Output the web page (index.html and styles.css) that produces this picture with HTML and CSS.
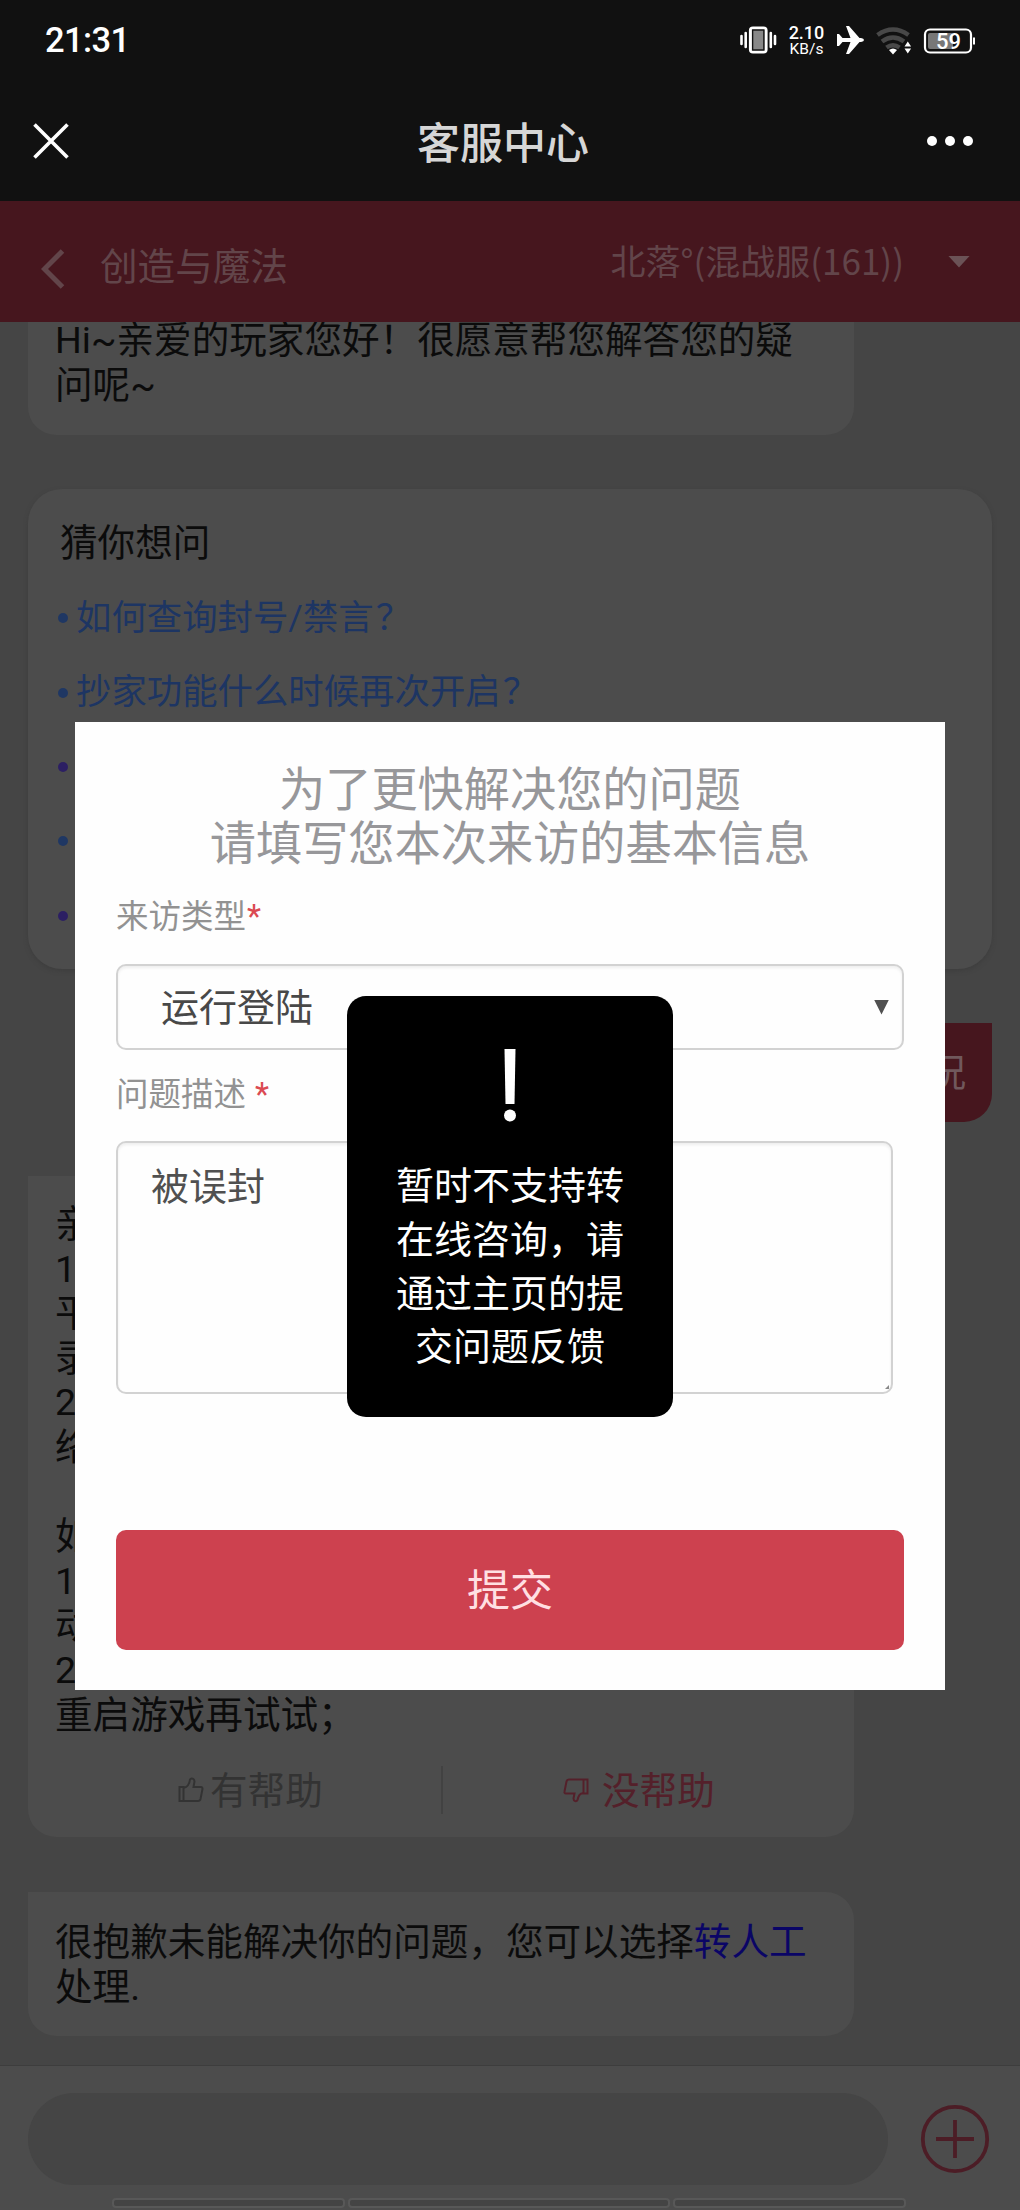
FILE: index.html
```html
<!DOCTYPE html>
<html lang="zh-CN">
<head>
<meta charset="utf-8">
<title>客服中心</title>
<link rel="stylesheet" href="styles.css">
</head>
<body>
<div class="screen">
  <div class="status">
    <span class="clock">21:31</span>
    <svg class="status-icons" width="240" height="40" viewBox="0 0 240 40">
      <rect x="10.500" y="8" width="15.500" height="24" rx="2.500" fill="#888" stroke="#fff" stroke-width="3.200"/>
      <rect x="12.600" y="10" width="11.300" height="20" fill="none" stroke="#111" stroke-width="1.400"/>
      <path d="M1.500 16v8M5.700 13v14M30.800 13v14M35 16v8" stroke="#fff" stroke-width="2.600" stroke-linecap="round"/>
      <text x="66.500" y="19" class="rate">2.10</text>
      <text x="66.500" y="33.500" class="unit">KB/s</text>
      <path d="M97 14h2l3.500 4h8L106 6h3l10.500 12H121q3 .5 3 2t-3 2h-1.500L109 34h-3l4.500-12h-8l-3.500 4h-2z" fill="#fff"/>
      <g fill="none" stroke="#484848" stroke-width="4.500">
        <path d="M137.500 15q15.500-11 31 0"/><path d="M142 21.500q11-8 22 0"/><path d="M146.500 27.500q6.500-4.500 13 0"/>
      </g>
      <path d="M149 30q4-3 8 0l-4 4.500z" fill="#fff"/>
      <path d="M164.500 26.500l3.300-5 3.300 5zM164.500 28.500l3.300 5 3.300-5z" fill="#fff"/>
      <rect x="188" y="13" width="25" height="16" rx="2" fill="#777"/>
      <rect x="185" y="9.500" width="46" height="23" rx="5" fill="none" stroke="#fff" stroke-width="2.200"/>
      <path d="M234 17.500v7" stroke="#fff" stroke-width="2"/>
      <text x="208.500" y="29" class="battery">59</text>
    </svg>
  </div>
  <div class="titlebar">
    <svg width="36" height="36" viewBox="0 0 36 36"><path d="M1.500 1.500L34.500 34.500M34.500 1.500L1.500 34.500" stroke="#fff" stroke-width="3.600"/></svg>
    <h1>客服中心</h1>
    <svg width="46" height="10" viewBox="0 0 46 10" fill="#fff"><circle cx="5" cy="5" r="5"/><circle cx="23" cy="5" r="5"/><circle cx="41" cy="5" r="5"/></svg>
  </div>
  <header class="game">
    <svg class="back" width="24" height="40" viewBox="0 0 24 40"><path d="M21.500 2L3.500 20l18 18" fill="none" stroke="#62454a" stroke-width="5"/></svg>
    <span class="game-name">创造与魔法</span>
    <span class="role">北落°(混战服(161))</span>
    <i class="caret"></i>
  </header>
  <main class="chat">
    <section class="bubble greet"><p>Hi~亲爱的玩家您好！很愿意帮您解答您的疑<br>问呢~</p></section>
    <section class="guess">
      <h2>猜你想问</h2>
      <ul>
        <li><span>如何查询封号/禁言<em>？</em></span></li>
        <li><span>抄家功能什么时候再次开启<em>？</em></span></li>
        <li class="seen"></li>
        <li></li>
        <li class="seen"></li>
      </ul>
    </section>
    <section class="mine">况</section>
    <section class="bubble answer">
      <p>亲<br>1<br>平<br>录<br>2<br>络<br><br>如<br>1<br>动<br>2<br>重启游戏再试试；</p>
      <div class="votes">
        <div class="vote">
          <svg width="26" height="26" viewBox="0 0 26 26"><path d="M1.500 10h4v14h-4zM5.500 11c4-1 6-4 6.500-8.500 1-2 4.500-1 4.500 2L15.500 10H23q1.500 0 1.500 2l-2 10q-.5 2-2.500 2H5.500"/></svg>
          <span>有帮助</span>
        </div>
        <div class="vote down">
          <svg width="26" height="26" viewBox="0 0 26 26"><path d="M24.500 2.500h-4v14h4zM20.500 16c-4 .5-5 3-6 7-1 2-4 1.500-4-1.500l1-5H3Q1 16.500 1.500 14.500l2-10q.5-2 2.500-2h14.500"/></svg>
          <span>没帮助</span>
        </div>
      </div>
    </section>
    <section class="bubble sorry">很抱歉未能解决你的问题，您可以选择<a>转人工</a><br>处理.</section>
  </main>
  <footer class="composer">
    <div class="entry">
      <div class="input"></div>
      <svg width="70" height="70" viewBox="0 0 70 70" fill="none" stroke="#4c1d26" stroke-width="3.800"><circle cx="35" cy="35" r="32.200"/><path d="M16 35h38M35 16v38"/></svg>
    </div>
    <div class="tabs"><i></i><i class="wide"></i><i></i></div>
  </footer>

  <div class="dialog">
    <div class="dialog-title">为了更快解决您的问题<br>请填写您本次来访的基本信息</div>
    <div class="label">来访类型<b>*</b></div>
    <div class="select"><span>运行登陆</span><i></i></div>
    <div class="label second">问题描述 <b>*</b></div>
    <div class="textarea">被误封</div>
    <div class="submit">提交</div>
  </div>

  <div class="toast">
    <svg width="24" height="74" viewBox="0 0 24 74" fill="#fff"><path d="M6.500 0h11l-1 55h-9z"/><circle cx="12" cy="66.500" r="6"/></svg>
    <p>暂时不支持转<br>在线咨询，请<br>通过主页的提<br>交问题反馈</p>
  </div>
</div>
</body>
</html>
```
FILE: styles.css
```css
* { box-sizing: border-box; margin: 0; padding: 0; }
body { background: #454545; font-family: Roboto, "Noto Sans CJK SC", sans-serif; }
.screen { position: relative; width: 1020px; height: 2210px; overflow: hidden; display: flex; flex-direction: column; white-space: nowrap; }
i, em { font-style: normal; }
i { display: block; }

.status { height: 80px; background: #111; display: flex; justify-content: space-between; padding: 20px 40px 0 45px; color: #fff; }
.clock { font: 500 34.500px/40px Roboto, sans-serif; letter-spacing: -.6px; }
.status-icons text { fill: #fff; font-family: Roboto, sans-serif; font-weight: 500; text-anchor: middle; }
.status-icons .rate { font-size: 18px; }
.status-icons .unit { font-size: 15.500px; font-weight: 400; }
.status-icons .battery { font-size: 22px; }

.titlebar { height: 121px; background: #111; display: flex; justify-content: space-between; align-items: center; padding: 0 47px 0 33px; }
.titlebar h1 { font-size: 43px; font-weight: 500; color: #d6d6d6; line-height: 60px; margin: 6px 0 0 10px; }

.game { height: 121px; background: #46161e; color: #62454a; display: flex; align-items: center; padding: 4px 50px 0 41px; }
.back { margin-top: 10px; }
.game-name { font-size: 37.600px; line-height: 50px; margin: 6px auto 0 35px; }
.role { font-family: "Noto Sans CJK SC", sans-serif; font-size: 35px; line-height: 50px; margin-top: -7px; }
.caret { width: 22px; height: 12px; background: #6b5256; clip-path: polygon(0 0, 100% 0, 50% 100%); margin: -4px 0 0 44px; }

.chat { height: 1743px; padding: 0 28px; overflow: hidden; color: #0b0b0b; font-size: 37.600px; line-height: 44.600px; }
.bubble { width: 826px; background: #4c4c4c; border-radius: 0 28px 28px 28px; padding: 0 27px; }
.greet { display: flow-root; height: 113px; margin-bottom: 54px; border-radius: 0 0 28px 28px; }
.greet p { margin-top: -4px; }
.guess { height: 480px; background: #4c4c4c; border-radius: 34px; padding: 30px 30px 0; box-shadow: 0 2px 4px #3e3e3e; }
.guess h2 { font-size: 37.600px; font-weight: 400; line-height: 48px; margin: 0 0 14px 2px; }
.guess ul { list-style: none; }
.guess li { height: 74.400px; display: flex; align-items: center; gap: 8px; color: #1d3563; font-size: 35.400px; }
.guess li em { padding-left: 2px; }
.guess li::before { content: ""; width: 10px; height: 10px; border-radius: 5px; background: #1f3763; }
.guess li.seen::before { background: #2c1f63; }
.mine { width: 300px; height: 99px; margin: 54px 0 54px auto; padding-right: 26px; background: #46161e; color: #70585c; border-radius: 28px 0 28px 28px; line-height: 101px; text-align: right; }
.answer { height: 661px; padding-top: 26px; margin-bottom: 55px; }
.votes { display: grid; grid-template-columns: 1fr 1fr; height: 44px; margin-top: 29px; width: 772px; }
.vote { display: flex; align-items: center; padding-left: 123px; gap: 6px; color: #333; }
.vote span { margin-top: 3px; }
.vote svg { fill: none; stroke: #333; stroke-width: 2; }
.vote.down { border-left: 2px solid #424242; padding-left: 120px; gap: 13px; color: #54202a; }
.vote.down svg { stroke: #54202a; }
.sorry { height: 144px; padding-top: 28px; }
.sorry a { color: #0a0566; }

.composer { height: 145px; background: #4c4c4c; border-top: 1px solid #3d3d3d; padding-top: 27px; }
.entry { display: flex; align-items: center; padding-left: 28px; gap: 32px; }
.input { width: 860px; height: 92px; border-radius: 46px; background: #454545; }
.tabs { display: flex; gap: 3px; margin: 13px 0 0 112px; }
.tabs i { width: 233px; height: 10px; background: #444; border: 2px solid #585858; border-radius: 4px; }
.tabs i.wide { width: 322px; }

.dialog { position: absolute; left: 75px; top: 722px; width: 870px; height: 968px; background: #fefefe; padding: 41px 41px 0; }
.dialog-title { font-size: 46.200px; line-height: 54px; color: #97979a; text-align: center; }
.label { font-size: 32.500px; line-height: 40px; color: #929292; margin: 26px 0 27px; }
.label b { font-weight: 400; color: #db4a52; margin-left: 1px; }
.select { height: 86px; border: 2px solid #d2d2d2; border-radius: 10px; display: flex; justify-content: space-between; align-items: center; padding: 0 13px 0 43px; font-size: 38px; color: #484848; box-shadow: inset 0 2px 3px #eee; }
.select span { margin-top: -6px; }
.select i { width: 15px; height: 15px; background: #505050; clip-path: polygon(0 0, 100% 0, 50% 100%); }
.label.second { margin: 25px 0 26px; }
.textarea { position: relative; width: 777px; height: 253px; border: 2px solid #d2d2d2; border-radius: 10px; padding: 16px 33px; font-size: 38px; line-height: 56px; color: #505050; box-shadow: inset 0 2px 3px #eee; }
.textarea::after { content: ""; position: absolute; right: 2px; bottom: 3px; width: 4px; height: 4px; background: #888; clip-path: polygon(100% 0, 100% 100%, 0 100%); }
.submit { height: 120px; margin-top: 136px; border-radius: 10px; background: #cd414f; color: #ffdfe2; font-size: 43px; line-height: 122px; text-align: center; }

.toast { position: absolute; left: 347px; top: 996px; width: 326px; height: 421px; border-radius: 19px; background: #000; color: #fff; text-align: center; padding-top: 53px; }
.toast svg { display: block; margin: 0 auto; }
.toast p { font-size: 38px; line-height: 53.800px; margin-top: 37px; }
```
